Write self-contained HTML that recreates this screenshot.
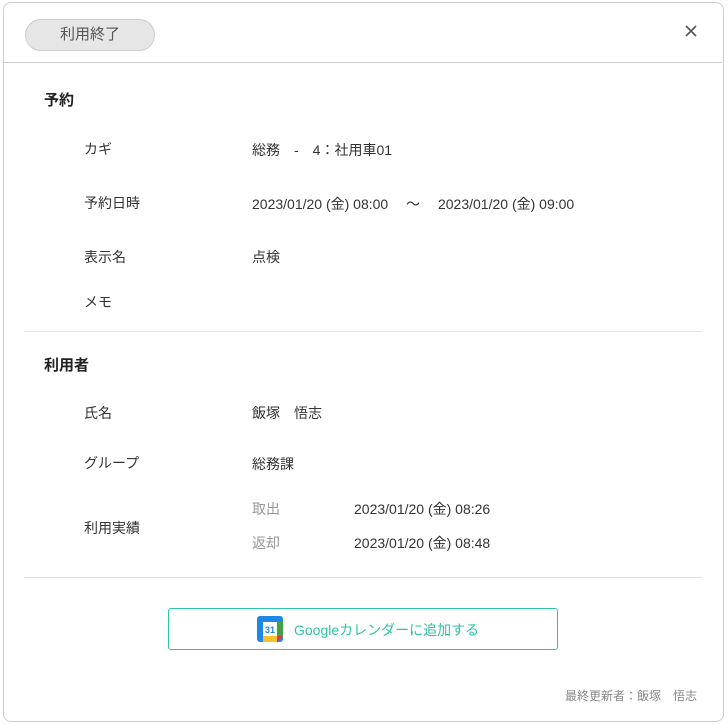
<!DOCTYPE html>
<html><head><meta charset="utf-8"><style>
body{margin:0;width:728px;height:725px;background:#fff;font-family:"Liberation Sans","Noto Sans CJK JP",sans-serif;color:#333;position:relative;overflow:hidden}
.modal{position:absolute;left:3px;top:2px;width:719px;height:718px;border:1px solid #ccc;border-radius:8px;background:#fff}
.a{position:absolute;white-space:nowrap;font-size:14px;line-height:20px}
.h{font-size:15px;font-weight:bold;color:#222}
.hr{position:absolute;height:1px;background:#e2e2e2}
.g{color:#999}
</style></head><body>
<div class="modal"></div>
<div class="a" style="left:25px;top:19px;width:128px;height:30px;border:1.5px solid #ccc;border-radius:16px;background:#e6e6e6;text-align:center;line-height:30px;font-size:15px;color:#555">利用終了</div>
<svg style="position:absolute;left:685px;top:25px" width="12" height="12" viewBox="0 0 12 12"><path d="M1 1L11 11M11 1L1 11" stroke="#555" stroke-width="1.6"/></svg>
<div class="hr" style="left:4px;top:62px;width:718px;background:#ccc"></div>
<div class="a h" style="left:44px;top:91px">予約</div>
<div class="a" style="left:84px;top:139px">カギ</div><div class="a" style="left:252px;top:140px">総務　-　4：社用車01</div>
<div class="a" style="left:84px;top:193px">予約日時</div><div class="a" style="left:252px;top:194px">2023/01/20 (金) 08:00　 〜　 2023/01/20 (金) 09:00</div>
<div class="a" style="left:84px;top:247px">表示名</div><div class="a" style="left:252px;top:247px">点検</div>
<div class="a" style="left:84px;top:292px">メモ</div>
<div class="hr" style="left:24px;top:331px;width:678px"></div>
<div class="a h" style="left:44px;top:356px">利用者</div>
<div class="a" style="left:84px;top:403px">氏名</div><div class="a" style="left:252px;top:403px">飯塚　悟志</div>
<div class="a" style="left:84px;top:453px">グループ</div><div class="a" style="left:252px;top:454px">総務課</div>
<div class="a" style="left:84px;top:518px">利用実績</div>
<div class="a g" style="left:252px;top:499px">取出</div><div class="a" style="left:354px;top:499px">2023/01/20 (金) 08:26</div>
<div class="a g" style="left:252px;top:533px">返却</div><div class="a" style="left:354px;top:533px">2023/01/20 (金) 08:48</div>
<div class="hr" style="left:24px;top:577px;width:678px"></div>
<div style="position:absolute;left:168px;top:608px;width:388px;height:40px;border:1px solid #2ec4a6;border-radius:3px"></div>
<svg style="position:absolute;left:257px;top:616px" width="26" height="26" viewBox="0 0 26 26">
<rect x="0" y="0" width="26" height="26" rx="3" fill="#1e88e5"/>
<rect x="20" y="6" width="6" height="14" fill="#43a047"/>
<rect x="6" y="20" width="14" height="6" fill="#fbc02d"/>
<polygon points="20,20 26,20 20,26" fill="#e53935"/>
<rect x="6" y="6" width="14" height="14" fill="#fff"/>
<text x="13" y="17" font-size="9" font-weight="bold" fill="#1e88e5" text-anchor="middle" font-family="Liberation Sans">31</text>
</svg>
<div class="a" style="left:294px;top:620px;font-size:14px;color:#2ec4a6">Googleカレンダーに追加する</div>
<div class="a g" style="right:31px;top:686px;font-size:12px;color:#888">最終更新者：飯塚　悟志</div>
</body></html>
